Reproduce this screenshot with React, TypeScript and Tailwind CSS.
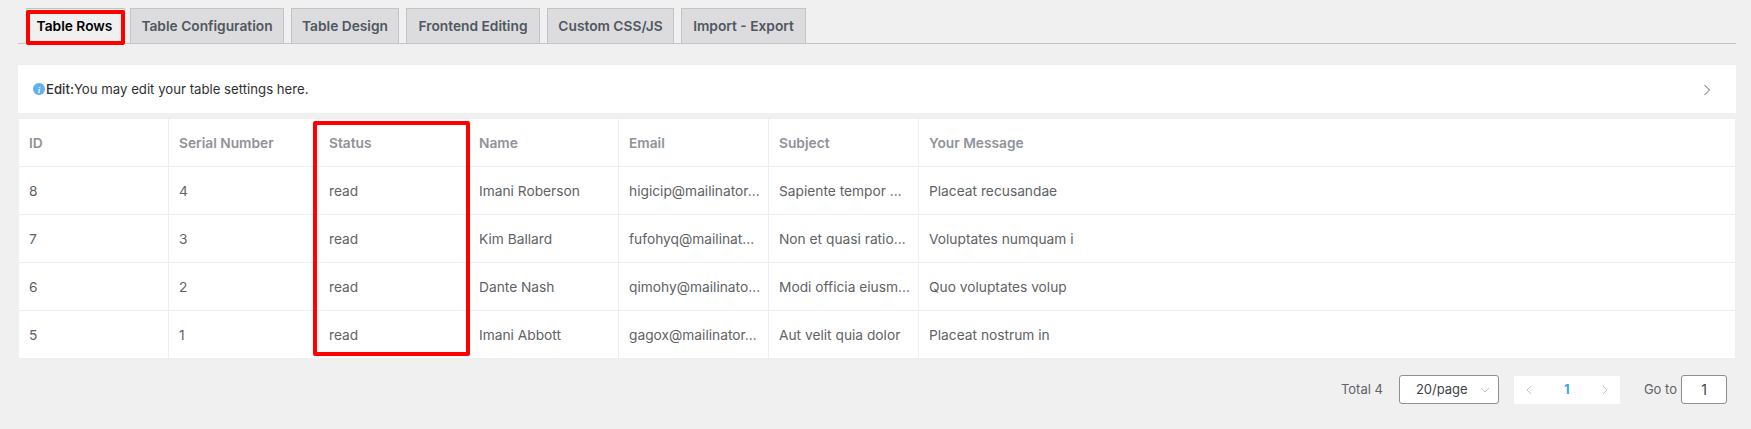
import React from "react";

const tabs = [
  { label: "Table Configuration", w: "w-[154px]" },
  { label: "Table Design", w: "w-[108px]" },
  { label: "Frontend Editing", w: "w-[134px]" },
  { label: "Custom CSS/JS", w: "w-[127px]" },
  { label: "Import - Export", w: "w-[125px]" },
];
const headers = ["ID", "Serial Number", "Status", "Name", "Email", "Subject", "Your Message"];
const rows = [
  ["8", "4", "read", "Imani Roberson", "higicip@mailinator…", "Sapiente tempor …", "Placeat recusandae"],
  ["7", "3", "read", "Kim Ballard", "fufohyq@mailinat…", "Non et quasi ratio…", "Voluptates numquam i"],
  ["6", "2", "read", "Dante Nash", "qimohy@mailinato…", "Modi officia eiusm…", "Quo voluptates volup"],
  ["5", "1", "read", "Imani Abbott", "gagox@mailinator…", "Aut velit quia dolor", "Placeat nostrum in"],
];

function Row({ cells, head }: { cells: string[]; head?: boolean }) {
  return (
    <div className="grid grid-cols-[150px_150px_150px_150px_150px_150px_1fr] h-[48px] border-b border-[#ebeef5]">
      {cells.map((c, i) => (
        <div
          key={i}
          className={`flex items-center whitespace-nowrap pl-[10px] pt-[1px] min-w-0 ${i < 6 ? "border-r border-[#ebeef5]" : ""} ${head ? "font-semibold text-[#909399]" : "text-[#606266]"}`}
        >
          <span>{c}</span>
        </div>
      ))}
    </div>
  );
}

export default function App() {
  return (
    <div className="relative h-[429px] w-[1751px] overflow-hidden bg-[#f0f0f1] pl-[18px] pr-[15px] pt-[8px] text-[13.75px] font-['Inter','Liberation_Sans',sans-serif]">
      <div className="flex h-[36px] border-b-[1px] border-[#c3c4c7] pl-[8px]">
        <div className="relative mr-[5px] flex h-[36px] w-[99px] items-center justify-center pr-[2px] border border-b-0 border-[#c3c4c7] bg-[#f0f0f1] font-semibold text-black">
          Table Rows
          <div className="absolute inset-x-[-1px] top-[1px] bottom-[-1px] rounded-[2px] border-[4px] border-[#ff0000]" />
        </div>
        <div className="flex gap-[7px]">
          {tabs.map((t) => (
            <div
              key={t.label}
              className={`flex h-[35px] items-center justify-center border border-b-0 border-[#c3c4c7] bg-[#dcdcde] font-semibold text-[#50575e] ${t.w}`}
            >
              {t.label}
            </div>
          ))}
        </div>
      </div>

      <div className="mt-[20px] flex h-[49px] items-center justify-between border-t border-[#ebeef5] bg-white pl-[15px] pr-[25px] pt-[1px] text-[13.2px] text-[#303133]">
        <div className="flex items-center">
          <svg width="12" height="12" viewBox="0 0 12 12" className="mr-[1px]">
            <circle cx="6" cy="6" r="6" fill="#60b0f4" />
            <text x="6" y="9.5" textAnchor="middle" fontSize="9" fontWeight="700" fontStyle="italic" fill="#fff" fontFamily="Liberation Serif, serif">i</text>
          </svg>
          <span className="font-medium">Edit:</span>
          <span>You may edit your table settings here.</span>
        </div>
        <svg width="8" height="12" viewBox="0 0 8 12" fill="none" stroke="#606266" strokeWidth="1">
          <path d="M1.5 1l5 5-5 5" />
        </svg>
      </div>

      <div className="relative ml-[1px] mr-[1px] mt-[5px] border-t border-[#ebeef5] bg-white">
        <Row cells={headers} head />
        {rows.map((r) => (
          <Row key={r[0]} cells={r} />
        ))}
        <div className="absolute left-[294px] top-[2px] h-[235px] w-[157px] rounded-[2px] border-[4px] border-[#ff0000]" />
      </div>

      <div className="mt-[16px] flex items-center justify-end pr-[9px] text-[13px] text-[#606266]">
        <span className="mr-[16px]">Total 4</span>
        <div className="mr-[15px] flex h-[29px] w-[100px] items-center justify-between rounded-[3px] border border-[#8c8f94] bg-white pl-[16px] pr-[8px] text-[#3c434a]">
          <span>20/page</span>
          <svg width="10" height="6" viewBox="0 0 10 6" fill="none" stroke="#c0c4cc" strokeWidth="1"><path d="M1 1l4 4 4-4" /></svg>
        </div>
        <div className="mr-[24px] flex h-[28px] w-[106px] items-center justify-between bg-white px-[11px]">
          <svg width="7" height="10" viewBox="0 0 7 10" fill="none" stroke="#c0c4cc" strokeWidth="1"><path d="M6 1L2 5l4 4" /></svg>
          <span className="font-bold text-[#409eff]">1</span>
          <svg width="7" height="10" viewBox="0 0 7 10" fill="none" stroke="#c0c4cc" strokeWidth="1"><path d="M1 1l4 4-4 4" /></svg>
        </div>
        <span className="mr-[4px]">Go to</span>
        <div className="flex h-[29px] w-[46px] items-center justify-center rounded-[3px] border border-[#8c8f94] bg-white text-[14px] text-[#3c434a]">1</div>
      </div>
    </div>
  );
}
